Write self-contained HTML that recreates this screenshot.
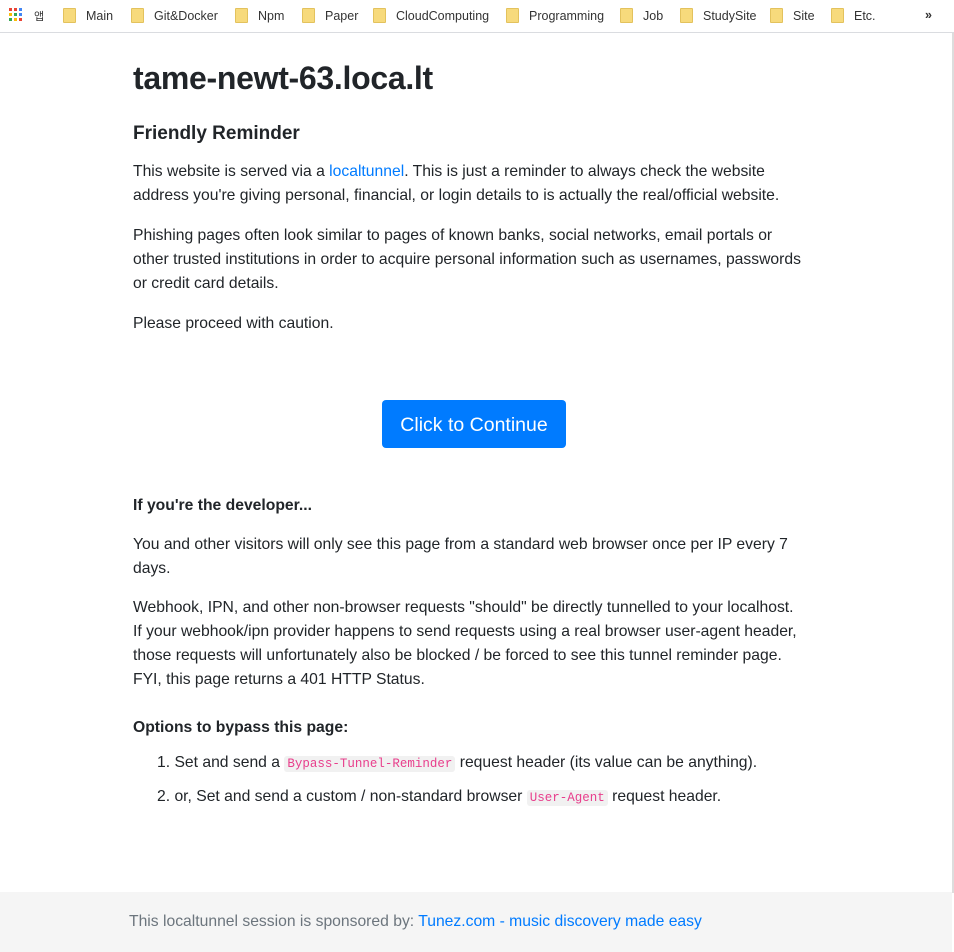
<!DOCTYPE html>
<html><head><meta charset="utf-8"><style>
body{margin:0;width:954px;height:952px;overflow:hidden;background:#fff;font-family:"Liberation Sans","Noto Sans CJK KR",sans-serif;color:#212529;position:relative}
.bar{height:32px;border-bottom:1px solid #dadce0;background:#fff;font-size:12.5px;color:#333;position:relative}
.bm{position:absolute;top:8px;white-space:nowrap}
.f{display:inline-block;width:11px;height:13px;background:#f7da7c;border:1px solid #e3c25d;border-radius:1px;vertical-align:-3px;margin-right:10px}
.rb{position:absolute;right:0;top:33px;width:2px;height:860px;background:#ddd}
.c{position:absolute;left:133px;top:0;white-space:nowrap;font-size:15.7px;line-height:24px}
h1{position:absolute;top:66px;margin:0;font-size:32px;font-weight:bold;letter-spacing:-0.3px}
h2{position:absolute;top:122px;margin:0;font-size:19px;font-weight:bold}
p{position:absolute;margin:0}
a{color:#007bff;text-decoration:none}
code{font-family:"Liberation Mono",monospace;font-size:12.5px;color:#e83e8c;background:#f1f1f1;padding:1px 3px;border-radius:3px}
.btn{position:absolute;left:382px;top:400px;width:184px;height:48px;background:#007bff;color:#fff;border-radius:4px;font-size:19.5px;line-height:50px;text-align:center}
.foot{position:absolute;left:0;top:892px;width:952px;height:60px;background:#f5f5f5;font-size:15.7px;color:#6c757d}
</style></head><body>
<div class="bar">
<span class="bm" style="left:9px;top:8px"><svg width="14" height="14"><g><rect x="0" y="0" width="3" height="3" fill="#ea4335"/><rect x="5" y="0" width="3" height="3" fill="#ea4335"/><rect x="10" y="0" width="3" height="3" fill="#4285f4"/><rect x="0" y="5" width="3" height="3" fill="#fbbc05"/><rect x="5" y="5" width="3" height="3" fill="#34a853"/><rect x="10" y="5" width="3" height="3" fill="#4285f4"/><rect x="0" y="10" width="3" height="3" fill="#34a853"/><rect x="5" y="10" width="3" height="3" fill="#fbbc05"/><rect x="10" y="10" width="3" height="3" fill="#ea4335"/></g></svg></span>
<span class="bm" style="left:34px;font-size:11px">앱</span>
<span class="bm" style="left:63px"><i class="f"></i>Main</span>
<span class="bm" style="left:131px"><i class="f"></i>Git&amp;Docker</span>
<span class="bm" style="left:235px"><i class="f"></i>Npm</span>
<span class="bm" style="left:302px"><i class="f"></i>Paper</span>
<span class="bm" style="left:373px"><i class="f"></i>CloudComputing</span>
<span class="bm" style="left:506px"><i class="f"></i>Programming</span>
<span class="bm" style="left:620px"><i class="f"></i>Job</span>
<span class="bm" style="left:680px"><i class="f"></i>StudySite</span>
<span class="bm" style="left:770px"><i class="f"></i>Site</span>
<span class="bm" style="left:831px"><i class="f"></i>Etc.</span>
<span class="bm" style="left:925px;font-weight:bold">»</span>
</div>
<div class="rb"></div>
<div class="c">
<h1>tame-newt-63.loca.lt</h1>
<h2>Friendly Reminder</h2>
<p style="top:160px">This website is served via a <a>localtunnel</a>. This is just a reminder to always check the website<br>address you're giving personal, financial, or login details to is actually the real/official website.</p>
<p style="top:224px">Phishing pages often look similar to pages of known banks, social networks, email portals or<br>other trusted institutions in order to acquire personal information such as usernames, passwords<br>or credit card details.</p>
<p style="top:312px">Please proceed with caution.</p>
<p style="top:494px;font-weight:bold">If you're the developer...</p>
<p style="top:533px">You and other visitors will only see this page from a standard web browser once per IP every 7<br>days.</p>
<p style="top:596px">Webhook, IPN, and other non-browser requests "should" be directly tunnelled to your localhost.<br>If your webhook/ipn provider happens to send requests using a real browser user-agent header,<br>those requests will unfortunately also be blocked / be forced to see this tunnel reminder page.<br>FYI, this page returns a 401 HTTP Status.</p>
<p style="top:716px;font-weight:bold">Options to bypass this page:</p>
<p style="top:751px;left:24px">1. Set and send a <code>Bypass-Tunnel-Reminder</code> request header (its value can be anything).</p>
<p style="top:785px;left:24px">2. or, Set and send a custom / non-standard browser <code>User-Agent</code> request header.</p>
</div>
<div class="btn">Click to Continue</div>
<div class="foot"><span style="position:absolute;left:129px;top:21px;white-space:nowrap">This localtunnel session is sponsored by: <a>Tunez.com - music discovery made easy</a></span></div>
</body></html>
